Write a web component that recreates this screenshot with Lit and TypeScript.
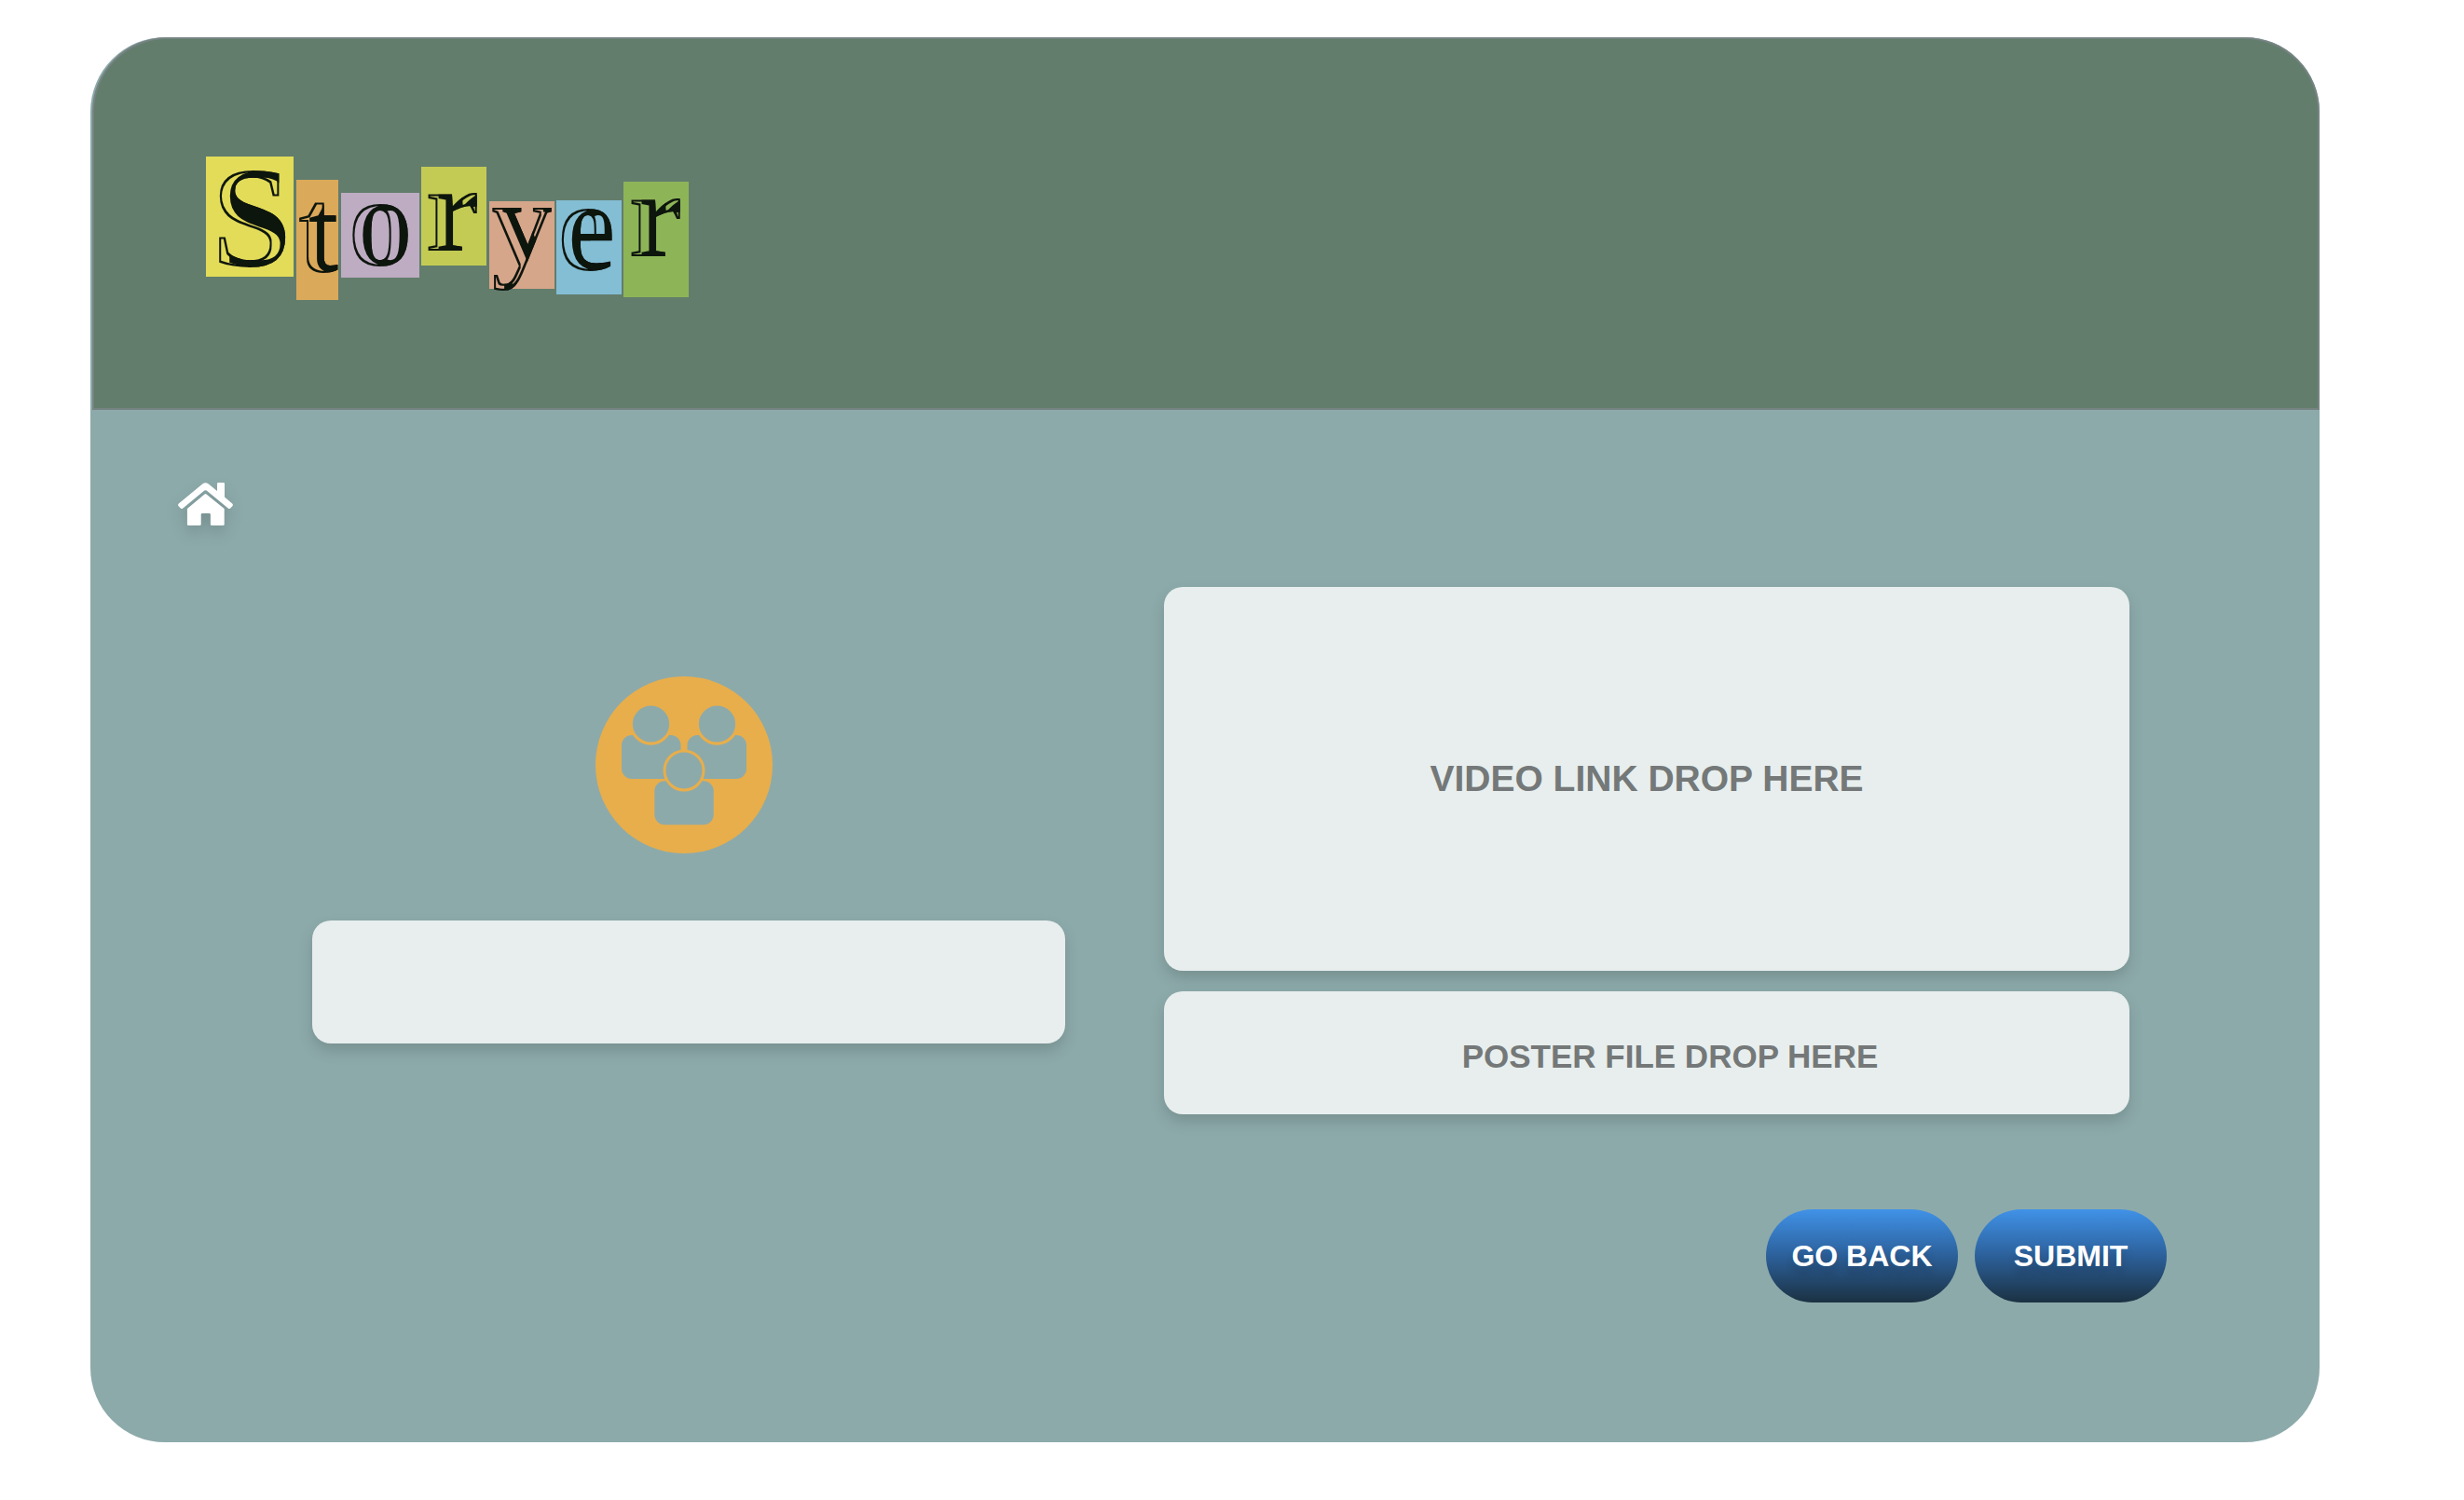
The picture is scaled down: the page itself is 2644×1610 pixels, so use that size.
import { LitElement, html, css, svg } from "lit";
import { customElement } from "lit/decorators.js";

interface Tile {
  letter: string;
  color: string;
  x: number;
  y: number;
  w: number;
  h: number;
  tx: number;
  base: number;
  size: number;
}

const TILES: Tile[] = [
  { letter: "S", color: "#e2dc58", x: 0, y: 0, w: 94, h: 129, tx: 6, base: 117, size: 154 },
  { letter: "t", color: "#dba95a", x: 97, y: 25, w: 45, h: 129, tx: 98, base: 124, size: 132 },
  { letter: "o", color: "#bdacc2", x: 145, y: 39, w: 84, h: 91, tx: 152, base: 117, size: 140 },
  { letter: "r", color: "#c3cb54", x: 231, y: 11, w: 70, h: 106, tx: 235, base: 101, size: 132 },
  { letter: "y", color: "#d6a68a", x: 304, y: 48, w: 70, h: 94, tx: 306, base: 116, size: 132 },
  { letter: "e", color: "#84bed4", x: 376, y: 47, w: 70, h: 101, tx: 377, base: 122, size: 140 },
  { letter: "r", color: "#8db558", x: 448, y: 27, w: 70, h: 124, tx: 453, base: 107, size: 132 },
];

@customElement("story-logo")
export class StoryLogo extends LitElement {
  static styles = css`
    :host {
      display: block;
    }
    .logo {
      display: block;
      width: 518px;
      height: 154px;
      overflow: visible;
    }
    .letter {
      font-family: "Liberation Serif", "Times New Roman", serif;
      font-weight: 700;
      fill: #10140f;
    }
  `;

  render() {
    return html`
      <svg class="logo" viewBox="0 0 518 154" role="img" aria-label="Storyer">
        <defs>
          <!-- Hollows out the left part of each stem, leaving a thin contour -->
          <filter id="inline" x="-10%" y="-10%" width="120%" height="120%">
            <feMorphology in="SourceGraphic" operator="erode" radius="2" result="core" />
            <feComposite in="SourceGraphic" in2="core" operator="out" result="contour" />
            <feOffset in="SourceGraphic" dx="11" dy="0" result="shifted" />
            <feComposite in="SourceGraphic" in2="shifted" operator="in" result="shade" />
            <feMerge>
              <feMergeNode in="contour" />
              <feMergeNode in="shade" />
            </feMerge>
          </filter>
        </defs>
        ${TILES.map((t) => svg`<rect x=${t.x} y=${t.y} width=${t.w} height=${t.h} fill=${t.color}></rect>`)}
        ${TILES.map(
          (t) => svg`
            <text class="letter" x=${t.tx} y=${t.base} font-size=${t.size} filter="url(#inline)">${t.letter}</text>
          `
        )}
      </svg>
    `;
  }
}

@customElement("app-root")
export class AppRoot extends LitElement {
  static styles = css`
    :host {
      display: block;
      box-sizing: border-box;
      min-height: 100vh;
      padding: 40px 155px 62px 97px;
      background: #ffffff;
      font-family: "Liberation Sans", Arial, Helvetica, sans-serif;
    }
    * {
      box-sizing: border-box;
    }
    .panel {
      min-height: calc(100vh - 102px);
      padding-left: 2px;
      padding-bottom: 150px;
      border-radius: 80px;
      background: #8daaaa;
    }
    .header {
      padding: 126px 120px 116px;
      border: 2px solid #768382;
      border-radius: 80px 80px 0 0;
      background: #627d6c;
    }
    .nav {
      display: flex;
      padding: 78px 92px 0;
    }
    .home {
      display: block;
      filter: drop-shadow(0 8px 8px rgba(0, 0, 0, 0.15));
    }
    .home-icon {
      display: block;
      width: 59px;
      height: 46px;
    }
    .fields {
      display: grid;
      grid-template-columns: 808fr 1036fr;
      column-gap: 106px;
      padding: 66px 204px 0 236px;
    }
    .group {
      display: flex;
      flex-direction: column;
      gap: 72px;
      padding-top: 96px;
    }
    .badge {
      display: flex;
      justify-content: center;
      padding-right: 10px;
    }
    .group-icon {
      display: block;
      width: 190px;
      height: 190px;
    }
    .drops {
      display: flex;
      flex-direction: column;
      gap: 22px;
    }
    .field {
      display: block;
      width: 100%;
      height: 132px;
      margin: 0;
      padding: 0 24px;
      border: 0;
      border-radius: 20px;
      outline: 0;
      background: #e7eeed;
      box-shadow: 0 8px 16px rgba(0, 0, 0, 0.15);
      color: #333333;
      font-family: inherit;
      font-size: 35px;
      font-weight: 700;
      text-align: center;
    }
    .field::placeholder {
      color: #747878;
      opacity: 1;
    }
    .video {
      height: 412px;
      font-size: 39px;
    }
    .poster {
      padding: 8px 24px 0 74px;
    }
    .actions {
      display: flex;
      justify-content: flex-end;
      gap: 18px;
      padding: 102px 164px 0;
    }
    .button {
      width: 206px;
      height: 100px;
      padding: 0;
      border: 0;
      border-radius: 50px;
      background: linear-gradient(#4092e8, #2c609a 50%, #1b3142);
      color: #ffffff;
      font-family: inherit;
      font-size: 32px;
      font-weight: 700;
      text-shadow: 0 8px 8px rgba(0, 0, 0, 0.15);
    }
  `;

  render() {
    return html`
      <div class="panel">
        <header class="header"><story-logo></story-logo></header>
        <nav class="nav">
          <a class="home" href="#home" aria-label="Home">
            <svg class="home-icon" viewBox="0 0 59 46" fill="#ffffff" aria-hidden="true">
              <path
                d="M.8 22.600 26.500 1.200Q29.500-.9 32.500 1.200L42 9V1.200Q42 0 43.200 0H48.800Q50 0 50 1.200V15.500L58.200 22.600Q59.500 23.900 58.400 25.200L56.200 27.500Q55 28.500 53.700 27.500L30.700 8.600Q29.500 7.700 28.300 8.600L5.300 27.500Q4 28.500 2.800 27.500L.6 25.200Q-.5 23.900.8 22.600Z"
              />
              <path
                d="M28.500 12.500Q29.500 11.700 30.500 12.500L49.700 28V44.700Q49.700 46 48.400 46H36.200Q34.900 46 34.900 44.700V34.300Q34.900 33 33.600 33H26Q24.700 33 24.700 34.300V44.700Q24.700 46 23.400 46H11.200Q9.900 46 9.900 44.700V28Z"
              />
            </svg>
          </a>
        </nav>
        <main>
          <form @submit=${(e: Event) => e.preventDefault()}>
            <div class="fields">
              <div class="group">
                <div class="badge">
                  <svg class="group-icon" viewBox="0 0 190 190" fill="#8daaaa" aria-hidden="true">
                    <circle cx="95" cy="95" r="95" fill="#e8ae4b" />
                    <rect x="28" y="63" width="63.500" height="47" rx="11" />
                    <rect x="98.500" y="63" width="63.500" height="47" rx="11" />
                    <g stroke="#e8ae4b" stroke-width="3.200">
                      <circle cx="59.500" cy="51" r="21.200" />
                      <circle cx="130.500" cy="51" r="21.200" />
                    </g>
                    <rect x="63.300" y="112.300" width="63.500" height="47" rx="11" />
                    <circle cx="95" cy="101" r="21" stroke="#e8ae4b" stroke-width="3" />
                  </svg>
                </div>
                <input class="field" type="text" aria-label="Group name" />
              </div>
              <div class="drops">
                <input class="field video" type="text" aria-label="Video link" placeholder="VIDEO LINK DROP HERE" />
                <input class="field poster" type="text" aria-label="Poster file" placeholder="POSTER FILE DROP HERE" />
              </div>
            </div>
            <div class="actions">
              <button class="button" type="button">GO BACK</button>
              <button class="button" type="submit">SUBMIT</button>
            </div>
          </form>
        </main>
      </div>
    `;
  }
}
